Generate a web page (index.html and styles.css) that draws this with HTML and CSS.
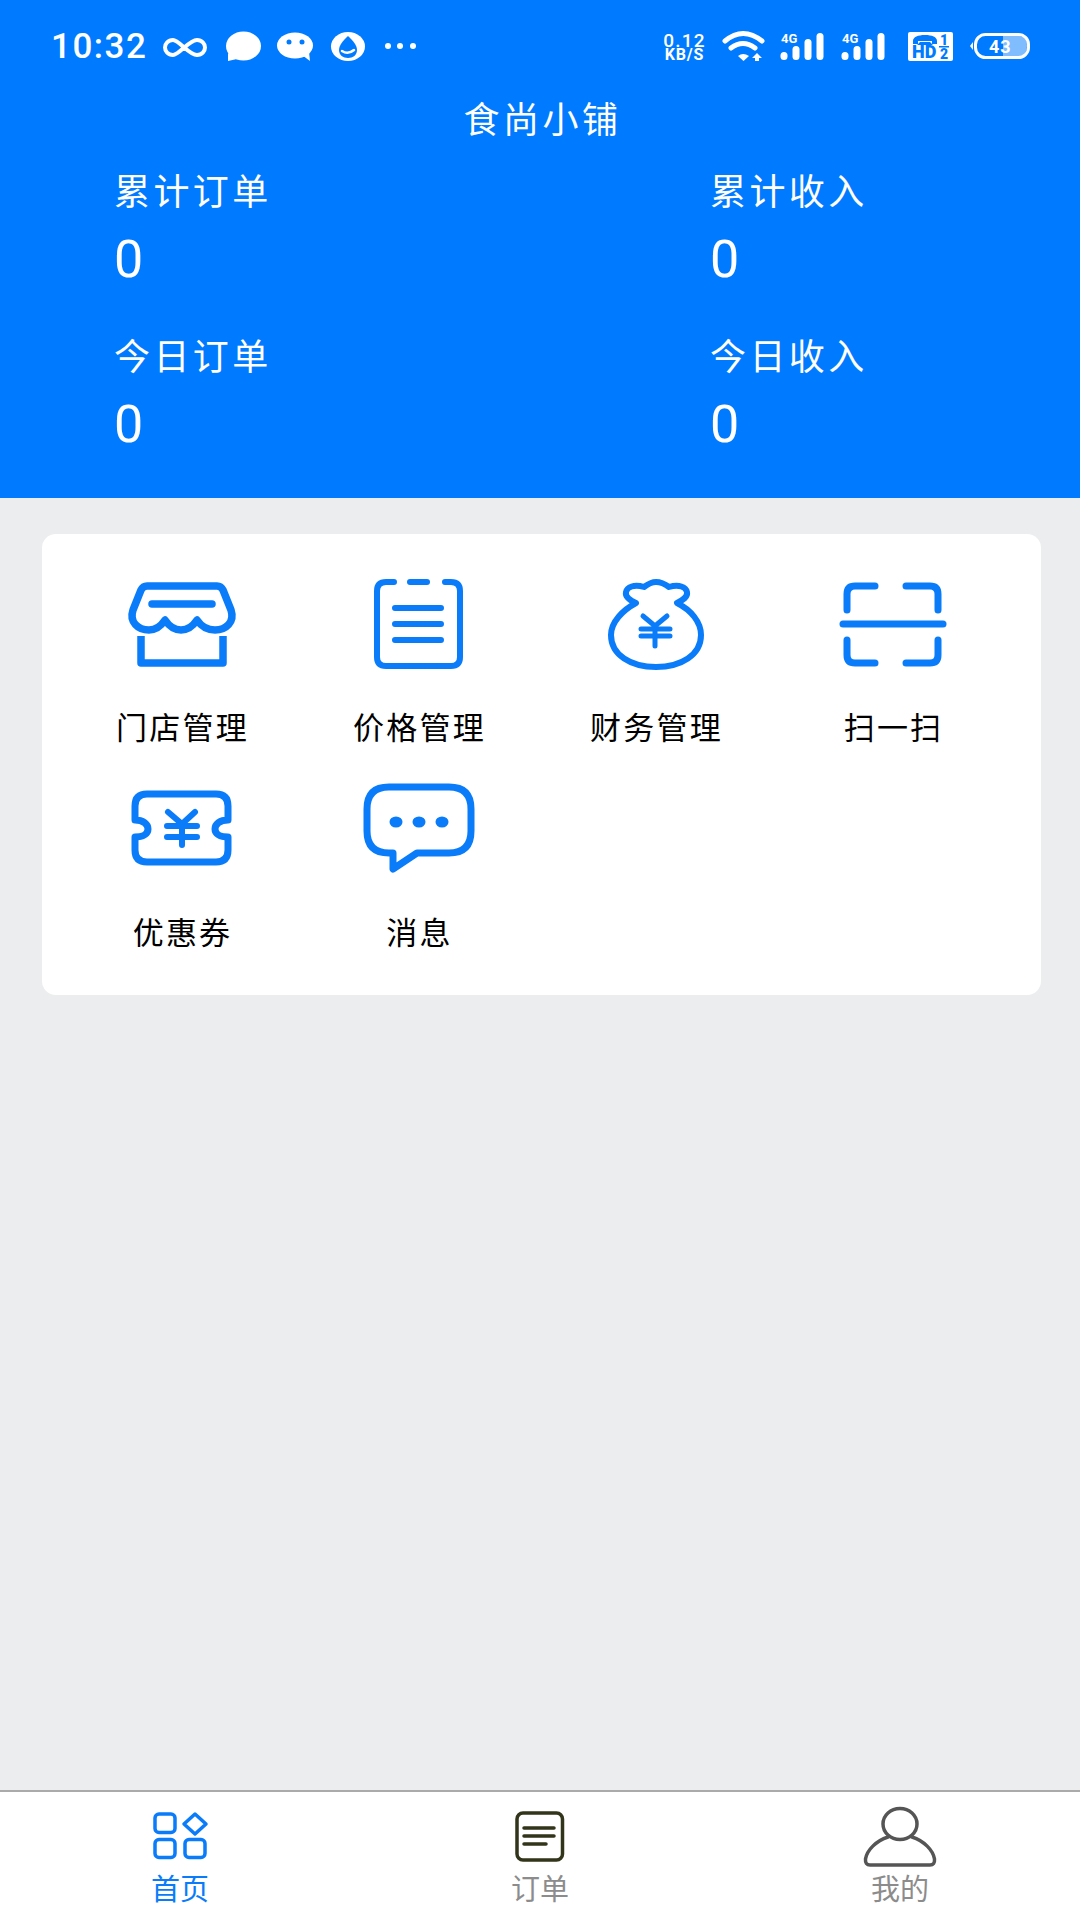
FILE: index.html
```html
<!DOCTYPE html>
<html lang="zh">
<head>
<meta charset="utf-8">
<title>食尚小铺</title>
<link rel="stylesheet" href="styles.css">
</head>
<body>
<div class="page">
  <header class="header">
    <div class="status">
      <div class="status-left">
        <span class="time">10:32</span>
        <svg class="notify" viewBox="0 0 260 40" width="260" height="40">
          <path class="st-line" d="M13 14C19 14 29 29 37 29C42 29 45 25 45 21.5C45 18 42 14 37 14C29 14 19 29 13 29C8 29 5 25 5 21.5C5 18 8 14 13 14Z"/>
          <ellipse class="st-fill" cx="83.5" cy="20" rx="17.5" ry="14.5"/>
          <path class="st-fill" d="M68 27L68 35L77 33Z"/>
          <ellipse class="st-fill" cx="135" cy="19.5" rx="18" ry="13"/>
          <path class="st-fill" d="M142 29L150 35L149 26Z"/>
          <circle class="st-blue" cx="129" cy="16" r="2.5"/>
          <circle class="st-blue" cx="142" cy="16" r="2.5"/>
          <ellipse class="st-fill" cx="188" cy="20.5" rx="17" ry="14.5"/>
          <path class="st-blue" d="M188 10C183 15 179 19 179 24C179 29 183 32 188 32C193 32 197 29 197 24C197 19 193 15 188 10Z"/>
          <path class="st-smile" d="M182 25Q188 29 194 24"/>
          <circle class="st-fill" cx="228" cy="20" r="3"/>
          <circle class="st-fill" cx="240" cy="20" r="3"/>
          <circle class="st-fill" cx="253" cy="20" r="3"/>
        </svg>
      </div>
      <div class="status-right">
        <div class="speed"><span class="speed-num">0.12</span><span class="speed-unit">KB/S</span></div>
        <svg class="indicators" viewBox="0 0 315 40" width="315" height="40">
          <path class="st-wifi" d="M5 15Q23 0 42 15"/>
          <path class="st-wifi" d="M11 22Q23 13 35 22"/>
          <path class="st-fill" d="M18 30Q23 26 29 30L23.500 35Z"/>
          <path class="st-fill" d="M37 27L42 32H39V35H35V32H32Z"/>
          <text class="st-4g" x="61" y="17">4G</text>
          <rect class="st-fill" x="60.500" y="26" width="7" height="8" rx="3.500"/>
          <rect class="st-fill" x="72.500" y="20" width="7" height="14" rx="3.500"/>
          <rect class="st-fill" x="84.500" y="13" width="7" height="21" rx="3.500"/>
          <rect class="st-fill" x="96.500" y="7" width="7" height="27" rx="3.500"/>
          <text class="st-4g" x="122" y="17">4G</text>
          <rect class="st-fill" x="121.500" y="26" width="7" height="8" rx="3.500"/>
          <rect class="st-fill" x="133.500" y="20" width="7" height="14" rx="3.500"/>
          <rect class="st-fill" x="145.500" y="13" width="7" height="21" rx="3.500"/>
          <rect class="st-fill" x="157.500" y="7" width="7" height="27" rx="3.500"/>
          <rect class="st-fill" x="188" y="6" width="45" height="29" rx="2"/>
          <path class="st-blue" d="M193 18V15C193 11 198 9 205 9C212 9 217 11 217 15V18H212V15H198V18ZM200 16H210L213 19H197Z"/>
          <text class="st-hd" x="192" y="32">HD</text>
          <text class="st-hd-n" x="220" y="19">1</text>
          <rect class="st-blue" x="219" y="20" width="10" height="1.500"/>
          <text class="st-hd-n" x="220" y="33">2</text>
          <path class="st-fill" d="M253 16L250 20L253 24Z"/>
          <path class="st-level" d="M283 10H299Q307 10 307 20Q307 30 299 30H283Z"/>
          <rect class="st-batt" x="255.500" y="8.500" width="53" height="23" rx="10"/>
          <text class="st-pct" x="269" y="27">43</text>
        </svg>
      </div>
    </div>
    <h1 class="title">食尚小铺</h1>
    <div class="stats">
      <div class="stat"><div class="stat-label">累计订单</div><div class="stat-value">0</div></div>
      <div class="stat"><div class="stat-label">累计收入</div><div class="stat-value">0</div></div>
      <div class="stat"><div class="stat-label">今日订单</div><div class="stat-value">0</div></div>
      <div class="stat"><div class="stat-label">今日收入</div><div class="stat-value">0</div></div>
    </div>
  </header>

  <main class="main">
    <section class="card">
      <div class="cell">
        <svg class="icon icon-bold" viewBox="0 0 120 110" width="120" height="110">
          <path d="M25 16H95Q99 16 101 20L109 40C113 52 104 60 93 60C85 60 79 56 75 50C71 56 65 60 59 60C53 60 47 56 43 50C39 56 33 60 27 60C16 60 7 52 11 40L19 20Q21 16 25 16Z"/>
          <path d="M30 34H90"/>
          <path class="butt" d="M19 66V93H101V66"/>
        </svg>
        <div class="cell-label">门店管理</div>
      </div>
      <div class="cell">
        <svg class="icon icon-thin" viewBox="0 0 120 110" width="120" height="110">
          <path d="M35 12H27Q18 12 18 21V87Q18 96 27 96H92Q101 96 101 87V21Q101 12 92 12H86"/>
          <path d="M51 12H68"/>
          <path d="M36 38H82M36 54H82M36 70H82"/>
        </svg>
        <div class="cell-label">价格管理</div>
      </div>
      <div class="cell">
        <svg class="icon icon-thin" viewBox="0 0 120 110" width="120" height="110">
          <path d="M40 33C33 30 29 27 30 22C31 17 38 14 48 17C52 14 56 12 60 12C65 12 69 14 73 17C83 14 90 17 91 22C92 27 87 30 81 33C95 40 105 52 105 65C105 85 85 97 60 97C35 97 15 85 15 65C15 52 27 40 40 33Z"/>
          <path class="yen" d="M47 46L59 56L71 46M59 56V76M45 59H74M45 66H74"/>
        </svg>
        <div class="cell-label">财务管理</div>
      </div>
      <div class="cell">
        <svg class="icon" viewBox="0 0 120 110" width="120" height="110">
          <path d="M14 40V24Q14 16 22 16H42M73 16H97Q105 16 105 24V40M14 70V85Q14 93 22 93H42M73 93H97Q105 93 105 85V70"/>
          <path d="M10 54H110"/>
        </svg>
        <div class="cell-label">扫一扫</div>
      </div>
      <div class="cell">
        <svg class="icon" viewBox="0 -5 120 110" width="120" height="110">
          <path d="M13 26Q13 14 25 14H94Q106 14 106 26V40C98 40 93 44 93 49C93 54 98 57 106 57V70Q106 82 94 82H25Q13 82 13 70V57C21 57 26 54 26 49C26 44 21 40 13 40Z"/>
          <path class="yen-bold" d="M46 32L60 44L73 32M60 44V65M45 46H75M45 57H75"/>
        </svg>
        <div class="cell-label">优惠券</div>
      </div>
      <div class="cell">
        <svg class="icon" viewBox="0 -5 120 110" width="120" height="110">
          <path d="M30 7H90Q112 7 112 29V51Q112 73 90 73H58L34 89V73H30Q8 73 8 51V29Q8 7 30 7Z"/>
          <ellipse class="dot" cx="37" cy="42" rx="6.500" ry="5.500"/>
          <ellipse class="dot" cx="60" cy="42" rx="6.500" ry="5.500"/>
          <ellipse class="dot" cx="83" cy="42" rx="6.500" ry="5.500"/>
        </svg>
        <div class="cell-label">消息</div>
      </div>
    </section>
  </main>

  <nav class="nav">
    <div class="tab tab-active">
      <svg class="tab-icon" viewBox="0 0 80 64" width="80" height="64">
        <rect x="15" y="9" width="20" height="18.500" rx="4"/>
        <path d="M55 9L66 19L55 29L44 19Z"/>
        <rect x="15" y="34.500" width="20" height="18" rx="4"/>
        <rect x="45" y="34.500" width="20" height="18" rx="4"/>
      </svg>
      <span class="tab-label">首页</span>
    </div>
    <div class="tab tab-orders">
      <svg class="tab-icon" viewBox="0 0 80 64" width="80" height="64">
        <rect x="17" y="8" width="45.500" height="47" rx="6"/>
        <path d="M24 23H54M24 31H54M24 39H46"/>
      </svg>
      <span class="tab-label">订单</span>
    </div>
    <div class="tab tab-mine">
      <svg class="tab-icon" viewBox="0 0 80 64" width="80" height="64">
        <ellipse cx="40" cy="19" rx="17" ry="15.500"/>
        <path d="M28 32C16 36 7 45 5.500 54Q5 60 10 60H70Q75 60 74.500 54C73 45 64 36 52 32"/>
      </svg>
      <span class="tab-label">我的</span>
    </div>
  </nav>
</div>
</body>
</html>
```

FILE: styles.css
```css
* { box-sizing: border-box; }

html, body {
  margin: 0;
  padding: 0;
}

body {
  font-family: "Noto Sans CJK SC", "Noto Sans", sans-serif;
  background: #ecedef;
}

.page {
  width: 1080px;
  height: 1920px;
  display: flex;
  flex-direction: column;
  overflow: hidden;
}

/* Header */
.header {
  background: #007aff;
  color: #fff;
  padding-bottom: 48px;
}

.status {
  height: 92px;
  display: flex;
  align-items: center;
  justify-content: space-between;
  padding: 0 45px 0 51px;
  font-family: Roboto, sans-serif;
}

.status-left,
.status-right {
  display: flex;
  align-items: center;
}

.time {
  width: 109px;
  margin-top: 2px;
  font-size: 35px;
  font-weight: 500;
  letter-spacing: 1.500px;
  line-height: 40px;
}

.speed {
  display: flex;
  flex-direction: column;
  align-items: center;
  width: 43px;
  margin-right: 14px;
}

.speed-num {
  font-size: 19px;
  line-height: 17px;
  letter-spacing: 1.200px;
  font-weight: 500;
}

.speed-unit {
  font-size: 16px;
  line-height: 12px;
  letter-spacing: 0.800px;
  font-weight: 700;
}

.st-fill { fill: #fff; }
.st-blue { fill: #007aff; }
.st-line { fill: none; stroke: #fff; stroke-width: 4; }
.st-smile { fill: none; stroke: #fff; stroke-width: 2.5; stroke-linecap: round; }
.st-wifi { fill: none; stroke: #fff; stroke-width: 5; stroke-linecap: round; }
.st-4g { fill: #fff; font-size: 13px; font-weight: 700; }
.st-hd { fill: #007aff; font-size: 18px; font-weight: 900; }
.st-hd-n { fill: #007aff; font-size: 14px; font-weight: 900; }
.st-level { fill: rgba(255, 255, 255, 0.5); }
.st-batt { fill: none; stroke: #fff; stroke-width: 3; }
.st-pct { fill: #fff; font-size: 18px; font-weight: 700; letter-spacing: 1px; }

.title {
  margin: 0;
  height: 50px;
  padding-left: 5px;
  line-height: 50px;
  font-size: 36px;
  font-weight: 400;
  letter-spacing: 3.500px;
  text-align: center;
}

.stats {
  margin-top: 24px;
  padding-left: 114px;
  display: grid;
  grid-template-columns: 596px 1fr;
  row-gap: 46px;
}

.stat-label {
  font-size: 36px;
  line-height: 46px;
  letter-spacing: 3.400px;
}

.stat-value {
  margin-top: 23px;
  font-family: Roboto, sans-serif;
  font-size: 52px;
  line-height: 50px;
}

/* Main */
.main {
  flex: 1;
}

.card {
  width: 999px;
  margin: 36px 0 0 42px;
  padding: 36px 0 44px 21px;
  background: #fff;
  border-radius: 14px;
  display: grid;
  grid-template-columns: repeat(4, 237px);
  row-gap: 29px;
}

.cell {
  display: flex;
  flex-direction: column;
  align-items: center;
}

.icon {
  display: block;
  fill: none;
  stroke: #0a7cfa;
  stroke-width: 7;
  stroke-linecap: round;
  stroke-linejoin: round;
}

.icon-thin { stroke-width: 6; }
.icon-bold { stroke-width: 7.500; }
.icon .butt { stroke-linecap: butt; }
.icon .yen { stroke-width: 5; }
.icon .yen-bold { stroke-width: 6; }
.icon .dot { fill: #0a7cfa; stroke: none; }

.cell-label {
  margin-top: 26px;
  padding-left: 2px;
  font-size: 31px;
  line-height: 40px;
  letter-spacing: 2.200px;
  color: #000;
}

/* Bottom navigation */
.nav {
  height: 130px;
  flex: none;
  background: #fff;
  border-top: 2px solid #aaa;
  padding-top: 13px;
  display: grid;
  grid-template-columns: repeat(3, 360px);
}

.tab {
  display: flex;
  flex-direction: column;
  align-items: center;
  color: #8c8c8c;
}

.tab-icon {
  display: block;
  fill: none;
  stroke-width: 3.500;
  stroke-linejoin: round;
  stroke-linecap: round;
}

.tab-label {
  font-size: 29px;
  line-height: 37px;
}

.tab-active { color: #0a7cfa; }
.tab-active .tab-icon { stroke: #0a7cfa; }
.tab-orders .tab-icon { stroke: #33351a; }
.tab-mine .tab-icon { stroke: #555; }
```
